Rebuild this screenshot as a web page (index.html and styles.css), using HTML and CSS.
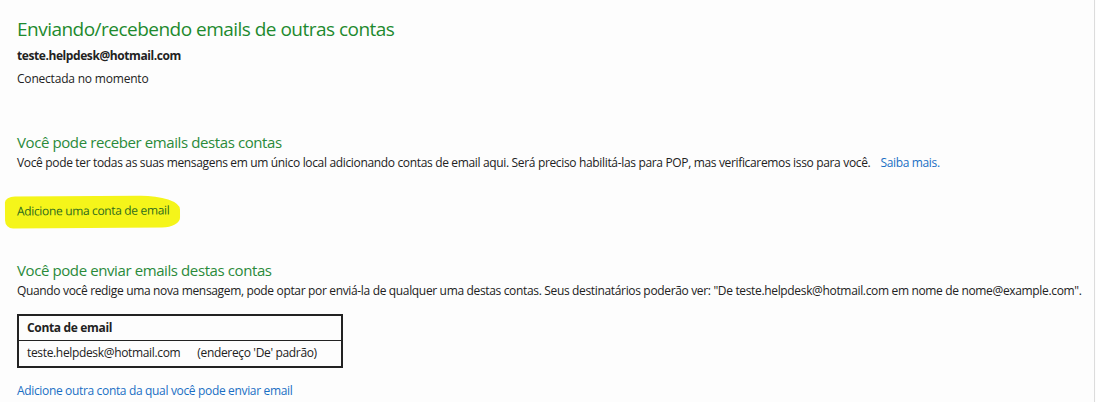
FILE: index.html
```html
<!DOCTYPE html>
<html lang="pt-BR">
<head>
<meta charset="utf-8">
<title>Enviando/recebendo emails de outras contas</title>
<link rel="stylesheet" href="styles.css">
</head>
<body>
<div class="page">
  <main class="content">
    <h1 class="title">Enviando/recebendo emails de outras contas</h1>
    <div class="account">teste.helpdesk@hotmail.com</div>
    <div class="status">Conectada no momento</div>

    <section class="section receive">
      <h2 class="heading">Você pode receber emails destas contas</h2>
      <p class="desc">Você pode ter todas as suas mensagens em um único local adicionando contas de email aqui. Será preciso habilitá-las para POP, mas verificaremos isso para você.<a class="link more" href="#">Saiba mais.</a></p>
      <div class="add-row"><a class="add-account" href="#">Adicione uma conta de email</a></div>
    </section>

    <section class="section send">
      <h2 class="heading">Você pode enviar emails destas contas</h2>
      <p class="desc">Quando você redige uma nova mensagem, pode optar por enviá-la de qualquer uma destas contas. Seus destinatários poderão ver: "De teste.helpdesk@hotmail.com em nome de nome@example.com".</p>
      <table class="accounts">
        <thead><tr><th>Conta de email</th></tr></thead>
        <tbody><tr><td>teste.helpdesk@hotmail.com<span class="default">(endereço 'De' padrão)</span></td></tr></tbody>
      </table>
      <a class="link add-send" href="#">Adicione outra conta da qual você pode enviar email</a>
    </section>
  </main>
  <div class="edge"></div>
</div>
</body>
</html>
```
FILE: styles.css
```css
html, body {
  margin: 0;
  padding: 0;
  background: #fdfdfd;
}
body {
  font-family: "Open Sans", "Noto Sans", "Liberation Sans", sans-serif;
  color: #222;
  font-size: 12px;
  letter-spacing: -0.34px;
  width: 1096px;
  height: 402px;
  overflow: hidden;
}
.page {
  display: flex;
  height: 402px;
}
.content {
  flex: 1;
  padding: 17px 0 0 17px;
  white-space: nowrap;
}
.edge {
  width: 1px;
  background: #dcdcdc;
  margin-right: 1px;
}
.title {
  margin: 0;
  font-weight: 400;
  font-size: 19px;
  line-height: 24px;
  letter-spacing: -0.52px;
  color: #1e8a2e;
}
.account {
  margin-top: 7px;
  font-weight: 700;
  font-size: 12px;
  line-height: 16px;
  letter-spacing: -0.42px;
}
.status {
  margin-top: 7px;
  font-size: 12px;
  line-height: 16px;
  letter-spacing: -0.2px;
}
.section { margin: 0; }
.receive { margin-top: 45px; }
.send { margin-top: 32px; }
.heading {
  margin: 0;
  font-weight: 400;
  font-size: 15px;
  line-height: 20px;
  letter-spacing: -0.4px;
  color: #2a8a3a;
}
.desc {
  margin: 3px 0 0;
  font-size: 12px;
  line-height: 16px;
}
.link {
  color: #1a6fc4;
  text-decoration: none;
}
.more { margin-left: 10px; }
.add-row {
  margin: 25px 0 0 -12px;
}
.add-account {
  display: inline-block;
  color: #2b6a1e;
  text-decoration: none;
  background: #f5f51a;
  padding: 6px 11px 9px 12px;
  border-radius: 10px 40px 18px 8px / 6px 14px 10px 8px;
  transform: rotate(-0.4deg);
}
.accounts {
  margin-top: 15px;
  border-collapse: collapse;
  border: 2px solid #222;
  width: 326px;
}
.accounts th {
  text-align: left;
  font-weight: 700;
  padding: 4px 8px 4px;
  border-bottom: 1px solid #222;
  line-height: 16px;
}
.accounts td {
  padding: 4px 8px 5px;
  line-height: 16px;
}
.default { margin-left: 17px; }
.add-send {
  display: inline-block;
  margin-top: 14px;
}
```
